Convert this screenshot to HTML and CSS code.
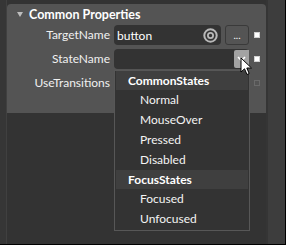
FILE: index.html
```html
<!DOCTYPE html>
<html lang="en">
<head>
  <meta charset="UTF-8" />
  <title>Common Properties</title>
  <link rel="stylesheet" href="styles.css">
</head>
<body>
  <div class="frame">
    <div class="left-strip"></div>
    <div class="main">
      <section class="panel">
        <h2 class="panel-title"><span class="caret"></span>Common Properties</h2>
        <div class="prop-grid">
          <label class="prop-label">TargetName</label>
          <div class="prop-value">
            <div class="text-box">
              <span class="text-value">button</span>
              <svg class="target-icon" width="15" height="15" viewBox="0 0 15 15">
                <circle cx="7.5" cy="7.5" r="6.2" fill="none" stroke="#b8b8b8" stroke-width="2"/>
                <circle cx="7.5" cy="7.5" r="2.6" fill="none" stroke="#b8b8b8" stroke-width="1.8"/>
              </svg>
            </div>
            <button class="dots-btn">...</button>
            <span class="marker filled"></span>
          </div>

          <label class="prop-label">StateName</label>
          <div class="prop-value">
            <div class="combo-box">
              <span class="combo-arrow">
                <svg width="9" height="6" viewBox="0 0 9 6"><path d="M1 1 L4.5 4.5 L8 1" fill="none" stroke="#fff" stroke-width="1.6"/></svg>
              </span>
            </div>
            <span class="marker filled"></span>
          </div>

          <label class="prop-label">UseTransitions</label>
          <div class="prop-value">
            <div class="spacer"></div>
            <span class="marker hollow"></span>
          </div>
        </div>
      </section>
      <div class="empty-area"></div>
    </div>
    <div class="right-strip"></div>
  </div>

  <ul class="dropdown">
    <li class="group">CommonStates</li>
    <li class="item">Normal</li>
    <li class="item">MouseOver</li>
    <li class="item">Pressed</li>
    <li class="item">Disabled</li>
    <li class="group">FocusStates</li>
    <li class="item">Focused</li>
    <li class="item">Unfocused</li>
  </ul>

  <svg class="cursor" width="14" height="20" viewBox="0 0 14 20">
    <path d="M1 1 L1 15 L4.5 11.8 L7 17.5 L9.2 16.5 L6.8 11 L11.5 11 Z" fill="#fff" stroke="#000" stroke-width="1"/>
  </svg>
</body>
</html>
```

FILE: styles.css
```css
* {
  box-sizing: border-box;
  margin: 0;
  padding: 0;
}

body {
  width: 286px;
  height: 245px;
  background: #000;
  font-family: Lato, 'Open Sans', sans-serif;
  font-size: 12px;
  color: #f2f2f2;
  position: relative;
  overflow: hidden;
}

.frame {
  display: flex;
  width: 285px;
  height: 244px;
  background: #333;
}

.left-strip {
  width: 7px;
  background: #363636;
  border-right: 1px solid #404040;
}

.main {
  width: 259px;
  display: flex;
  flex-direction: column;
  padding-top: 4px;
  background: #333;
}

.right-strip {
  flex: 1;
  background: #3d3d3d;
  border-left: 2px solid #353535;
}

/* Properties panel */
.panel {
  background: #545454;
  border-radius: 4px 4px 0 0;
  height: 109px;
}

.panel-title {
  display: flex;
  align-items: center;
  height: 20px;
  padding-left: 10px;
  font-size: 12.5px;
  font-weight: bold;
  color: #fff;
}

.caret {
  width: 0;
  height: 0;
  border-left: 3.5px solid transparent;
  border-right: 3.5px solid transparent;
  border-top: 5px solid #bdbdbd;
  margin-right: 6px;
}

.prop-grid {
  display: grid;
  grid-template-columns: 103px 1fr;
  column-gap: 4px;
  row-gap: 4px;
  padding-top: 1px;
}

.prop-label {
  text-align: right;
  line-height: 20px;
  color: #f0f0f0;
}

.prop-value {
  display: flex;
  align-items: center;
  height: 20px;
}

.text-box {
  width: 107px;
  height: 20px;
  background: #333;
  border-radius: 4px;
  display: flex;
  align-items: center;
  justify-content: space-between;
  padding: 0 3px 0 3px;
}

.text-value {
  color: #fff;
}

.target-icon {
  display: block;
}

.dots-btn {
  width: 24px;
  height: 20px;
  margin-left: 4px;
  background: #545454;
  border: 1px solid #3a3a3a;
  border-radius: 3px;
  color: #fff;
  font-family: inherit;
  font-size: 10px;
  line-height: 14px;
}

.combo-box {
  width: 135px;
  height: 20px;
  background: #333;
  border-radius: 4px;
  display: flex;
  justify-content: flex-end;
  padding: 1px 0;
}

.combo-arrow {
  width: 15px;
  height: 18px;
  background: #a3a3a3;
  border-radius: 2px 0 0 2px;
  display: flex;
  align-items: center;
  justify-content: center;
}

.spacer {
  width: 135px;
}

.marker {
  width: 6px;
  height: 6px;
  margin-left: 5px;
}

.marker.filled {
  background: #fff;
  border: 1px solid #d0d0d0;
}

.marker.hollow {
  border: 1px solid #6a6a6a;
}

.empty-area {
  flex: 1;
  background: #333;
}

/* Dropdown popup */
.dropdown {
  position: absolute;
  left: 114px;
  top: 70px;
  width: 136px;
  height: 161px;
  list-style: none;
  background: #333;
  border: 1px solid #575757;
  padding: 0 1px;
}

.dropdown .group {
  height: 19px;
  line-height: 19px;
  background: #3f3f3f;
  padding-left: 12px;
  font-weight: bold;
  color: #fff;
}

.dropdown .item {
  height: 20px;
  line-height: 20px;
  padding-left: 24px;
  color: #f4f4f4;
}

.cursor {
  position: absolute;
  left: 240px;
  top: 57px;
}
```
